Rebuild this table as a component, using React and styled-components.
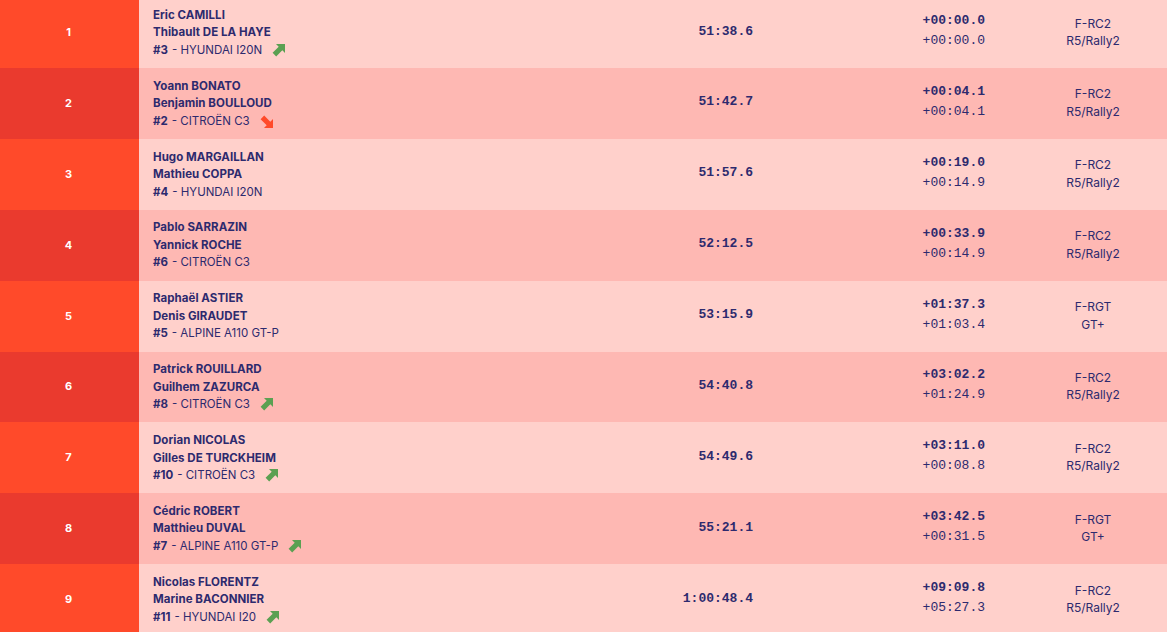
import React from "react";
import styled, { createGlobalStyle } from "styled-components";

const Global = createGlobalStyle`
  html, body { margin: 0; padding: 0; background: #FFD0CB; overflow: hidden; }
  body { font-family: "Poppins", "Inter", "Noto Sans", sans-serif; }
`;

const rows = [
  { pos: 1, d1: "Eric CAMILLI", d2: "Thibault DE LA HAYE", num: 3, car: "HYUNDAI I20N", trend: "up", time: "51:38.6", g1: "+00:00.0", g2: "+00:00.0", c1: "F-RC2", c2: "R5/Rally2" },
  { pos: 2, d1: "Yoann BONATO", d2: "Benjamin BOULLOUD", num: 2, car: "CITROËN C3", trend: "down", time: "51:42.7", g1: "+00:04.1", g2: "+00:04.1", c1: "F-RC2", c2: "R5/Rally2" },
  { pos: 3, d1: "Hugo MARGAILLAN", d2: "Mathieu COPPA", num: 4, car: "HYUNDAI I20N", time: "51:57.6", g1: "+00:19.0", g2: "+00:14.9", c1: "F-RC2", c2: "R5/Rally2" },
  { pos: 4, d1: "Pablo SARRAZIN", d2: "Yannick ROCHE", num: 6, car: "CITROËN C3", time: "52:12.5", g1: "+00:33.9", g2: "+00:14.9", c1: "F-RC2", c2: "R5/Rally2" },
  { pos: 5, d1: "Raphaël ASTIER", d2: "Denis GIRAUDET", num: 5, car: "ALPINE A110 GT-P", time: "53:15.9", g1: "+01:37.3", g2: "+01:03.4", c1: "F-RGT", c2: "GT+" },
  { pos: 6, d1: "Patrick ROUILLARD", d2: "Guilhem ZAZURCA", num: 8, car: "CITROËN C3", trend: "up", time: "54:40.8", g1: "+03:02.2", g2: "+01:24.9", c1: "F-RC2", c2: "R5/Rally2" },
  { pos: 7, d1: "Dorian NICOLAS", d2: "Gilles DE TURCKHEIM", num: 10, car: "CITROËN C3", trend: "up", time: "54:49.6", g1: "+03:11.0", g2: "+00:08.8", c1: "F-RC2", c2: "R5/Rally2" },
  { pos: 8, d1: "Cédric ROBERT", d2: "Matthieu DUVAL", num: 7, car: "ALPINE A110 GT-P", trend: "up", time: "55:21.1", g1: "+03:42.5", g2: "+00:31.5", c1: "F-RGT", c2: "GT+" },
  { pos: 9, d1: "Nicolas FLORENTZ", d2: "Marine BACONNIER", num: 11, car: "HYUNDAI I20", trend: "up", time: "1:00:48.4", g1: "+09:09.8", g2: "+05:27.3", c1: "F-RC2", c2: "R5/Rally2" },
];

const Table = styled.div`
  margin-top: -2.875px;
  display: flex;
  flex-direction: column;
`;

const Row = styled.div`
  display: grid;
  grid-template-columns: 139px 1fr 100px 266px 148px;
  height: 70.875px;
  background: ${(p) => (p.$even ? "#FEB8B3" : "#FFD0CB")};
  color: #2D2A6E;
  align-items: center;
`;

const Pos = styled.div`
  height: 100%;
  display: flex;
  align-items: center;
  justify-content: center;
  background: ${(p) => (p.$even ? "#EA3A2E" : "#FF4A2A")};
  color: #fff;
  font-family: "Inter", sans-serif;
  font-weight: 700;
  font-size: 11px;
  padding: 0 2px 1px 0;
  box-sizing: border-box;
`;

const Crew = styled.div`
  padding: 1px 0 0 14px;
  display: flex;
  flex-direction: column;
  font-family: "Inter", sans-serif;
  font-size: 11.5px;
  line-height: 17.5px;
`;

const Driver = styled.div`
  font-weight: 700;
  letter-spacing: 0.05px;
`;

const CarLine = styled.div`
  display: flex;
  align-items: center;
  font-weight: 400;
  font-size: 11.5px;
  letter-spacing: 0;
`;

const Num = styled.span`
  font-weight: 700;
  margin-right: 4px;
`;

const Arrow = styled.svg`
  width: 14px;
  height: 14px;
  margin-left: 10px;
  margin-top: ${(p) => (p.$down ? "1px" : "-2px")};
`;

const Time = styled.div`
  text-align: right;
  font-family: "Liberation Mono", "DejaVu Sans Mono", monospace;
  font-weight: 700;
  font-size: 13px;
  padding-bottom: 3px;
`;

const Gaps = styled.div`
  padding-right: 34px;
  text-align: right;
  font-family: "Liberation Mono", "DejaVu Sans Mono", monospace;
  font-size: 13px;
  line-height: 20px;
  display: flex;
  flex-direction: column;
  padding-bottom: 3px;
`;

const Gap = styled.span`
  font-weight: ${(p) => (p.$bold ? 700 : 400)};
`;

const Cat = styled.div`
  text-align: center;
  font-family: "Inter", sans-serif;
  font-size: 12px;
  line-height: 17.5px;
  display: flex;
  flex-direction: column;
  padding-bottom: 1px;
`;

function TrendArrow({ dir }) {
  const down = dir === "down";
  return (
    <Arrow viewBox="0 0 14 14" $down={down}>
      <g transform={down ? "rotate(90 7 7)" : undefined}>
        <path
          d="M4 1 H13 V10 L10.3 7.3 L4.2 13.4 L0.6 9.8 L6.7 3.7 Z"
          fill={down ? "#FF4A2A" : "#5BA052"}
        />
      </g>
    </Arrow>
  );
}

export default function App() {
  return (
    <>
      <Global />
      <Table>
        {rows.map((r, i) => {
          const even = i % 2 === 1;
          return (
            <Row key={r.pos} $even={even}>
              <Pos $even={even}>{r.pos}</Pos>
              <Crew>
                <Driver>{r.d1}</Driver>
                <Driver>{r.d2}</Driver>
                <CarLine>
                  <Num>#{r.num}</Num> - {r.car}
                  {r.trend && <TrendArrow dir={r.trend} />}
                </CarLine>
              </Crew>
              <Time>{r.time}</Time>
              <Gaps>
                <Gap $bold>{r.g1}</Gap>
                <Gap>{r.g2}</Gap>
              </Gaps>
              <Cat>
                <span>{r.c1}</span>
                <span>{r.c2}</span>
              </Cat>
            </Row>
          );
        })}
      </Table>
    </>
  );
}
